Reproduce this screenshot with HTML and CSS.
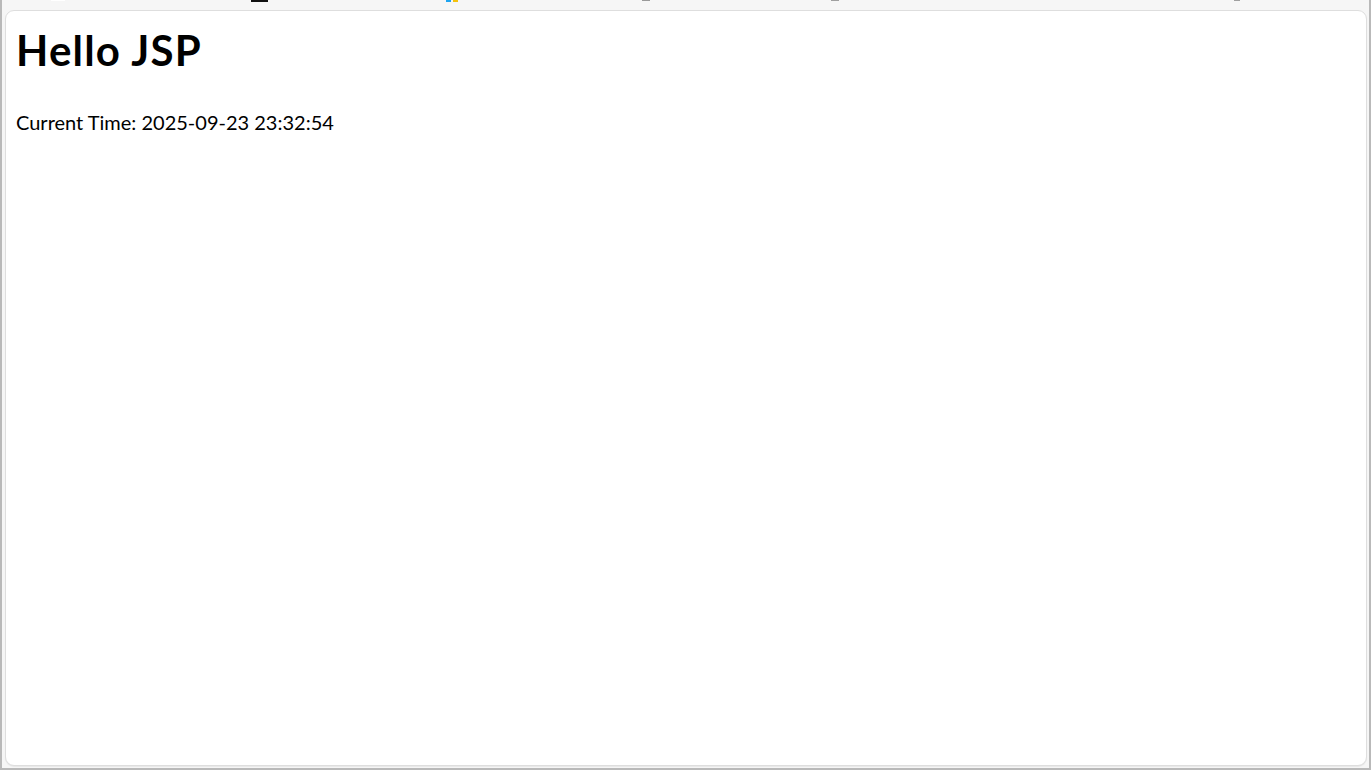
FILE: index.html
```html
<!DOCTYPE html>
<html lang="en">
<head>
<meta charset="utf-8">
<title>Hello JSP</title>
<link rel="stylesheet" href="styles.css">
</head>
<body>
<div class="window">
  <div class="toolbar-edge">
    <span class="mark m1"></span>
    <span class="mark m2"></span>
    <span class="mark m3"><i class="blue"></i><i class="yellow"></i></span>
    <span class="mark m4"></span>
    <span class="mark m5"></span>
    <span class="mark m6"></span>
  </div>
  <div class="viewport">
    <h1 class="title">Hello JSP</h1>
    <p class="time">Current Time: 2025-09-23 23:32:54</p>
  </div>
</div>
</body>
</html>
```

FILE: styles.css
```css
html, body {
  margin: 0;
  padding: 0;
  height: 100%;
}
body {
  background: #f5f5f5;
  overflow: hidden;
}
.window {
  box-sizing: border-box;
  width: 1371px;
  height: 770px;
  border-left: 2px solid #b9b9b9;
  border-right: 2px solid #b9b9b9;
  border-bottom: 2px solid #b9b9b9;
  background: #f6f6f6;
  display: flex;
  flex-direction: column;
  padding: 0 2px 2px 3px;
}
.toolbar-edge {
  height: 10px;
  flex: none;
  position: relative;
}
.mark {
  position: absolute;
  top: 0;
  height: 2px;
}
.m1 { left: 46px; width: 14px; background: #ffffff; height: 1px; }
.m2 { left: 246px; width: 17px; background: #111; }
.m3 { left: 441px; width: 15px; display: flex; gap: 2px; }
.m3 i { display: block; width: 5px; height: 2px; }
.m3 .blue { background: #1ea4f0; }
.m3 .yellow { background: #f4c20d; }
.m4 { left: 637px; width: 8px; background: #9a9a9a; height: 1px; }
.m5 { left: 826px; width: 8px; background: #a0a0a0; height: 1px; }
.m6 { left: 1229px; width: 6px; background: #a0a0a0; height: 1px; }
.viewport {
  flex: 1;
  background: #ffffff;
  border: 1px solid #dedede;
  border-radius: 9px;
  box-shadow: 0 1px 1px rgba(0,0,0,0.06);
  padding: 14px 10px 10px 10px;
  font-family: "Lato", "Liberation Sans", sans-serif;
  color: #000;
}
.title {
  margin: 0;
  font-size: 42px;
  line-height: 50px;
  font-weight: 700;
  letter-spacing: 1.2px;
  padding-left: 0;
}
.time {
  margin: 34px 0 0 0;
  font-size: 20px;
  line-height: 26px;
}
```
